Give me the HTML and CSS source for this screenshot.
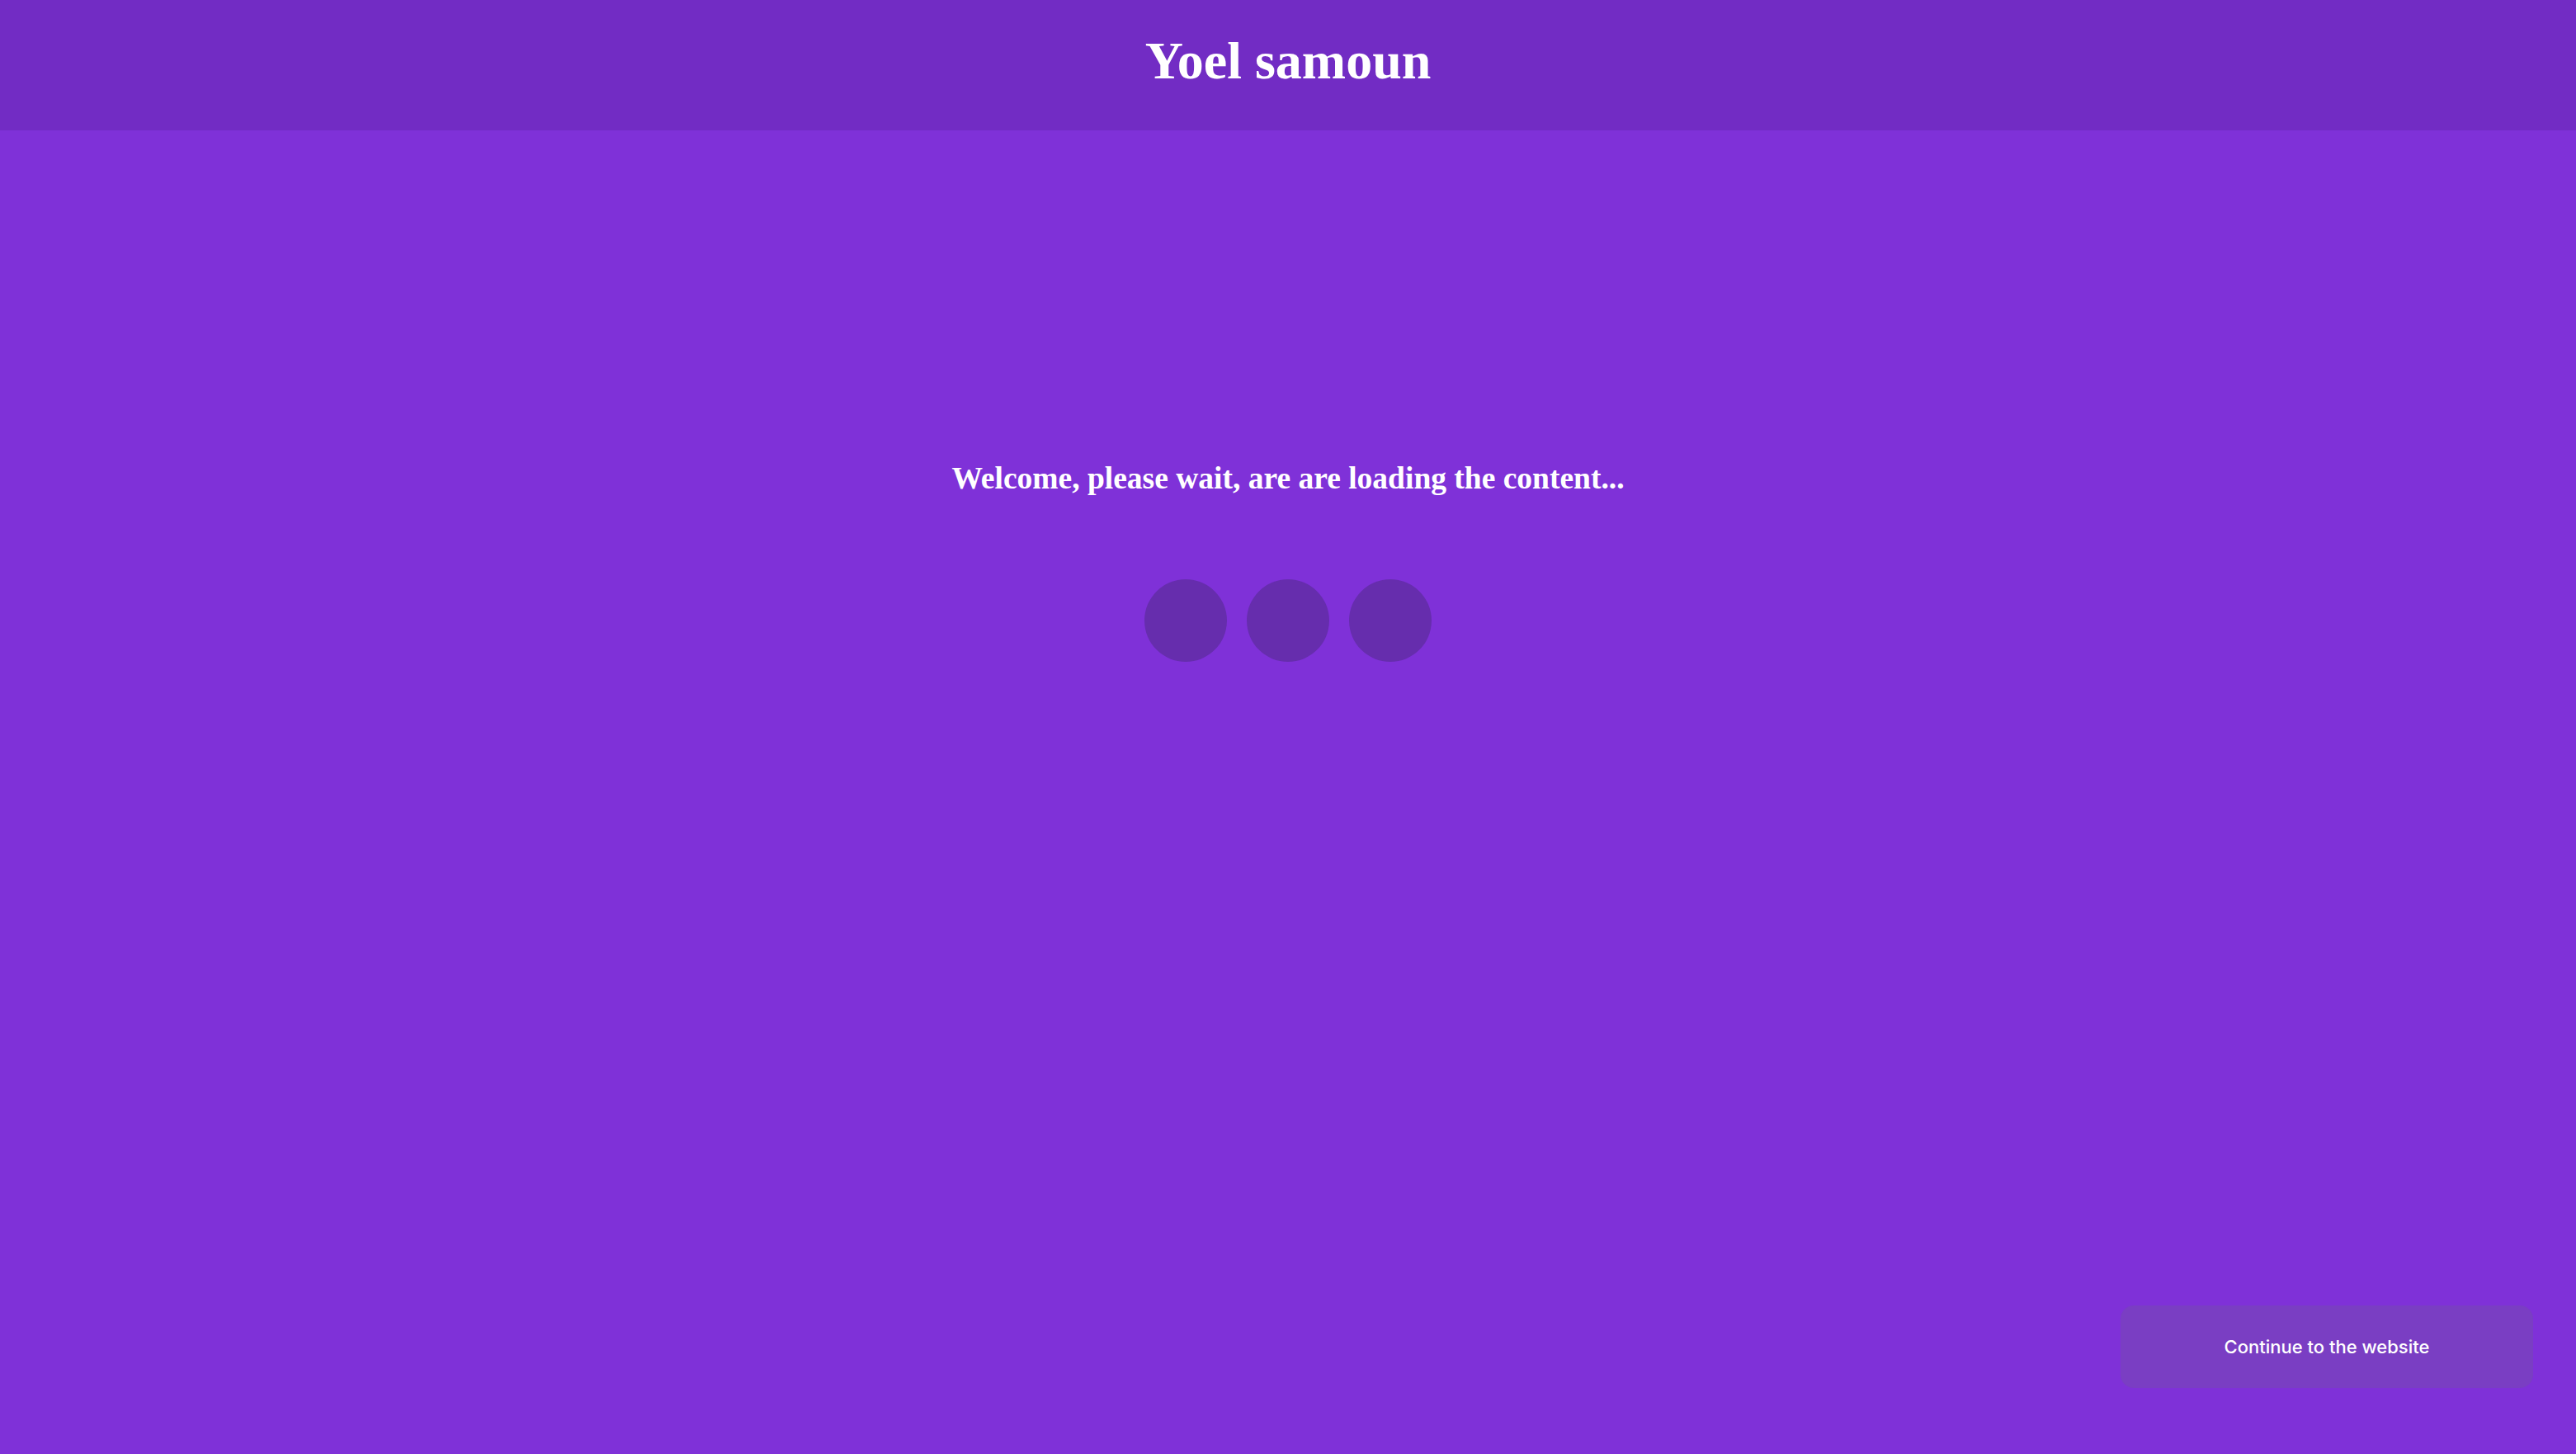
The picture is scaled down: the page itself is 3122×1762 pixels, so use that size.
FILE: index.html
```html
<!DOCTYPE html>
<html lang="en">
<head>
<meta charset="utf-8">
<title>Yoel samoun</title>
<link rel="stylesheet" href="styles.css">
</head>
<body>
<header class="site-header">
  <h1 class="site-title">Yoel samoun</h1>
</header>
<main class="loader">
  <h2 class="loader-text">Welcome, please wait, are are loading the content...</h2>
  <div class="dots">
    <span class="dot"></span>
    <span class="dot"></span>
    <span class="dot"></span>
  </div>
</main>
<button class="continue-btn" type="button">Continue to the website</button>
</body>
</html>
```
FILE: styles.css
```css
html, body {
  margin: 0;
  padding: 0;
}
body {
  min-height: 100vh;
  background: #7f31d8;
  font-family: "Liberation Serif", "Times New Roman", serif;
  color: #ffffff;
}
.site-header {
  height: 158px;
  box-sizing: border-box;
  padding-top: 38px;
  background: #722cc4;
}
.site-title {
  margin: 0;
  font-size: 64px;
  line-height: 72px;
  font-weight: bold;
  text-align: center;
}
.loader {
  display: flex;
  flex-direction: column;
  align-items: center;
  padding-top: 400px;
}
.loader-text {
  margin: 0;
  font-size: 37.5px;
  line-height: 44px;
  font-weight: bold;
  text-align: center;
}
.dots {
  display: flex;
  gap: 24px;
  margin-top: 100px;
}
.dot {
  width: 100px;
  height: 100px;
  border-radius: 50%;
  background: #662dad;
}
.continue-btn {
  position: fixed;
  right: 52px;
  bottom: 80px;
  width: 500px;
  height: 100px;
  border: none;
  border-radius: 16px;
  background: #7a3ec3;
  color: #ffffff;
  font-family: Inter, "Liberation Sans", sans-serif;
  font-size: 22px;
  font-weight: 500;
  cursor: pointer;
}
```
